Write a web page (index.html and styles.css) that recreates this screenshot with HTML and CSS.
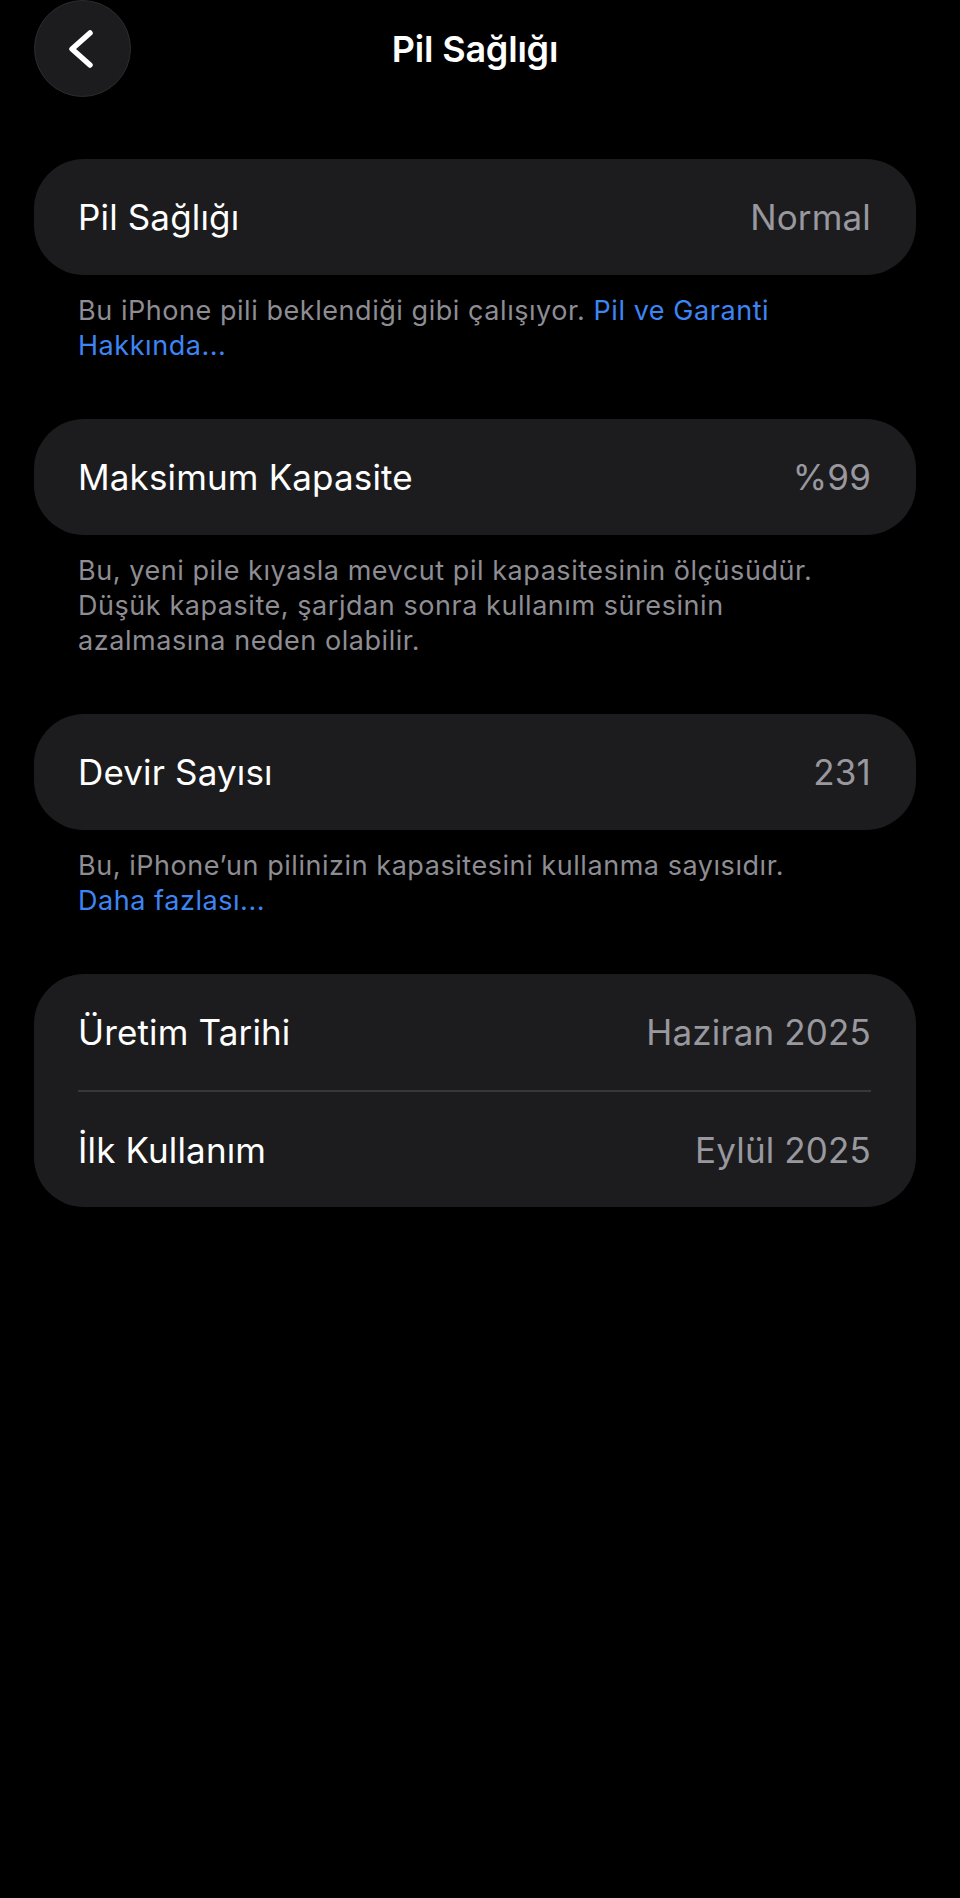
FILE: index.html
```html
<!DOCTYPE html>
<html lang="tr">
<head>
    <meta charset="UTF-8">
    <meta name="viewport" content="width=device-width, initial-scale=1.0">
    <title>Pil Sağlığı</title>
    <link rel="stylesheet" href="styles.css">
</head>
<body>
    <div class="page">
        <header class="nav">
            <button class="back" aria-label="Geri">
                <svg width="30" height="44" viewBox="0 0 30 44">
                    <path d="M24 6 L6 22 L24 38" fill="none" stroke="#fff" stroke-width="5.5" stroke-linecap="round" stroke-linejoin="round"/>
                </svg>
            </button>
            <h1>Pil Sağlığı</h1>
            <span></span>
        </header>

        <section class="group">
            <div class="card">
                <div class="row">
                    <span class="label">Pil Sağlığı</span>
                    <span class="value">Normal</span>
                </div>
            </div>
            <p class="note">Bu iPhone pili beklendiği gibi çalışıyor. <a href="#">Pil ve Garanti</a> <a href="#">Hakkında...</a></p>
        </section>

        <section class="group">
            <div class="card">
                <div class="row">
                    <span class="label">Maksimum Kapasite</span>
                    <span class="value">%99</span>
                </div>
            </div>
            <p class="note">Bu, yeni pile kıyasla mevcut pil kapasitesinin ölçüsüdür. Düşük kapasite, şarjdan sonra kullanım süresinin azalmasına neden olabilir.</p>
        </section>

        <section class="group">
            <div class="card">
                <div class="row">
                    <span class="label">Devir Sayısı</span>
                    <span class="value">231</span>
                </div>
            </div>
            <p class="note">Bu, iPhone’un pilinizin kapasitesini kullanma sayısıdır.<br><a href="#">Daha fazlası...</a></p>
        </section>

        <section class="group">
            <div class="card">
                <div class="row">
                    <span class="label">Üretim Tarihi</span>
                    <span class="value">Haziran 2025</span>
                </div>
                <div class="row">
                    <span class="label">İlk Kullanım</span>
                    <span class="value">Eylül 2025</span>
                </div>
            </div>
        </section>
    </div>
</body>
</html>
```

FILE: styles.css
```css
body {
    margin: 0;
    background: #000;
    color: #fff;
    font-family: Inter, "Noto Sans", sans-serif;
}
.page {
    padding: 0 44px 0 34px;
}
.nav {
    display: grid;
    grid-template-columns: 97px 1fr 97px;
    align-items: center;
    height: 97px;
    margin-bottom: 62px;
}
.back {
    width: 97px;
    height: 97px;
    border-radius: 50%;
    background: #1c1c1e;
    border: 1px solid #2c2c2e;
    display: flex;
    align-items: center;
    justify-content: center;
    padding: 0 4px 0 0;
    cursor: pointer;
}
.nav h1 {
    margin: 0;
    text-align: center;
    font-size: 36px;
    font-weight: 600;
    letter-spacing: -0.2px;
}
.group {
    margin-bottom: 56px;
}
.card {
    background: #1c1c1e;
    border-radius: 50px;
    padding: 0 45px 0 44px;
}
.row {
    display: flex;
    justify-content: space-between;
    align-items: center;
    height: 116px;
}
.row + .row {
    border-top: 2px solid #38383a;
    height: 115px;
}
.label {
    font-size: 35px;
    letter-spacing: 0.15px;
}
.value {
    font-size: 35px;
    letter-spacing: 0.15px;
    color: #98989e;
}
.note {
    margin: 0;
    padding: 18px 45px 0 44px;
    font-size: 27px;
    line-height: 35px;
    letter-spacing: 0.55px;
    color: #8d8d93;
}
.note a {
    color: #3d85f5;
    text-decoration: none;
}
```
